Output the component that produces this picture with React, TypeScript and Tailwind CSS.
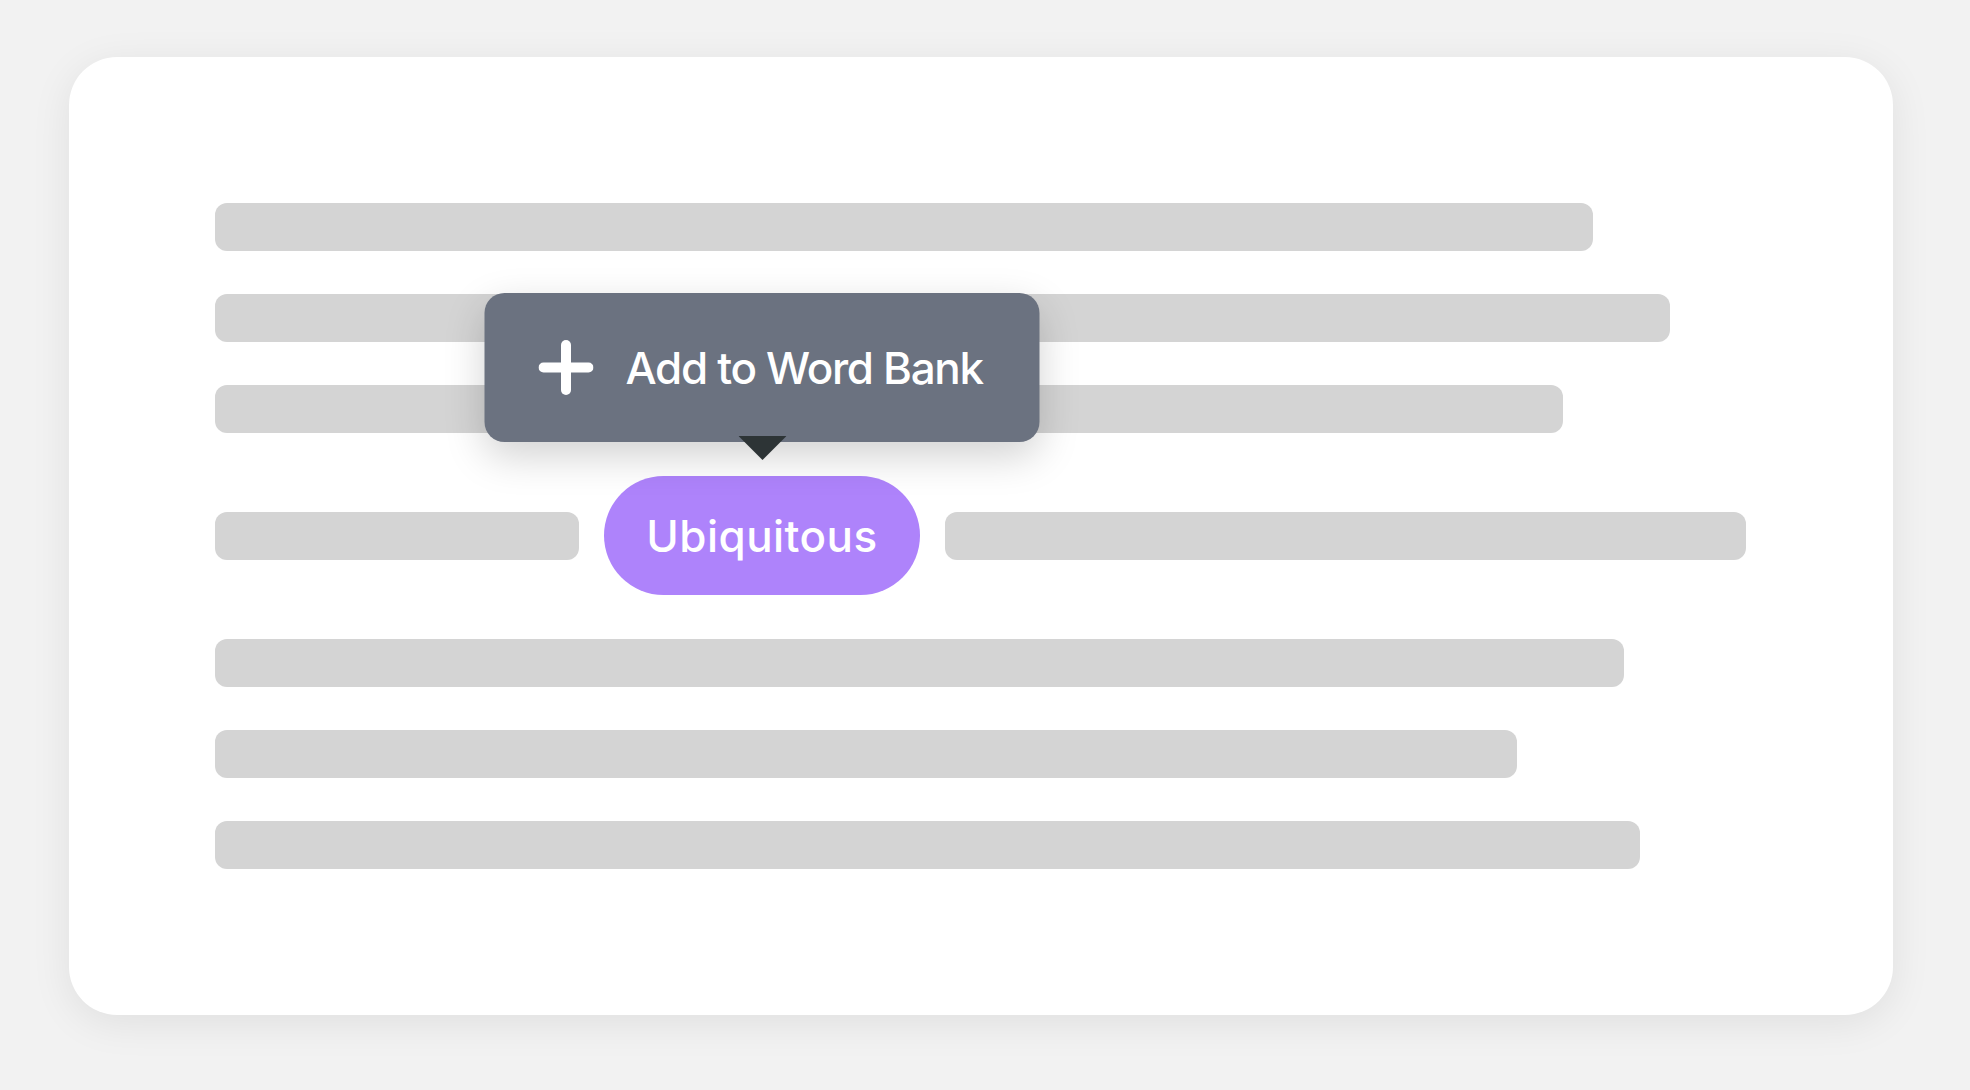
import React from "react";

function Bar({ w }: { w: number }) {
  return <div className="h-[48px] rounded-[12px] bg-[#d4d4d4]" style={{ width: w }} />;
}

function PlusIcon() {
  return (
    <svg width="55" height="55" viewBox="0 0 55 55" className="shrink-0">
      <line x1="5" y1="27.5" x2="50" y2="27.5" stroke="white" strokeWidth="10" strokeLinecap="round" />
      <line x1="27.5" y1="5" x2="27.5" y2="50" stroke="white" strokeWidth="10" strokeLinecap="round" />
    </svg>
  );
}

export default function App() {
  return (
    <div
      className="w-[1970px] h-[1090px] bg-[#f2f2f2] pt-[57px] pl-[69px]"
      style={{ fontFamily: "Inter, 'Noto Sans', sans-serif" }}
    >
      <div className="w-[1824px] h-[958px] bg-white rounded-[48px] shadow-[0_8px_40px_rgba(0,0,0,0.08)] p-[146px] flex flex-col gap-[43px]">
        <Bar w={1378} />
        <Bar w={1455} />
        <Bar w={1348} />
        <div className="h-[121px] flex items-center gap-[25px]">
          <Bar w={364} />
          <div className="relative w-[316px] h-[119px] rounded-full bg-[#ae83fb] flex items-center justify-center">
            <span className="text-white text-[44px] font-medium leading-none tracking-[0.01em]">Ubiquitous</span>
            <div className="absolute bottom-[calc(100%+34px)] left-1/2 -translate-x-1/2 w-[555px] h-[149px] rounded-[20px] bg-[#6b7280] shadow-[0_14px_40px_rgba(0,0,0,0.18)] flex items-center pl-[54px] gap-[32px]">
              <PlusIcon />
              <span className="text-white text-[44px] font-medium leading-none whitespace-nowrap tracking-[-0.03em]">Add to Word Bank</span>
              <svg
                width="48"
                height="24"
                viewBox="0 0 48 24"
                className="absolute top-[143px] left-1/2 -translate-x-1/2"
              >
                <polygon points="0,0 48,0 24,24" fill="#2d3436" />
              </svg>
            </div>
          </div>
          <Bar w={801} />
        </div>
        <Bar w={1409} />
        <Bar w={1302} />
        <Bar w={1425} />
      </div>
    </div>
  );
}
